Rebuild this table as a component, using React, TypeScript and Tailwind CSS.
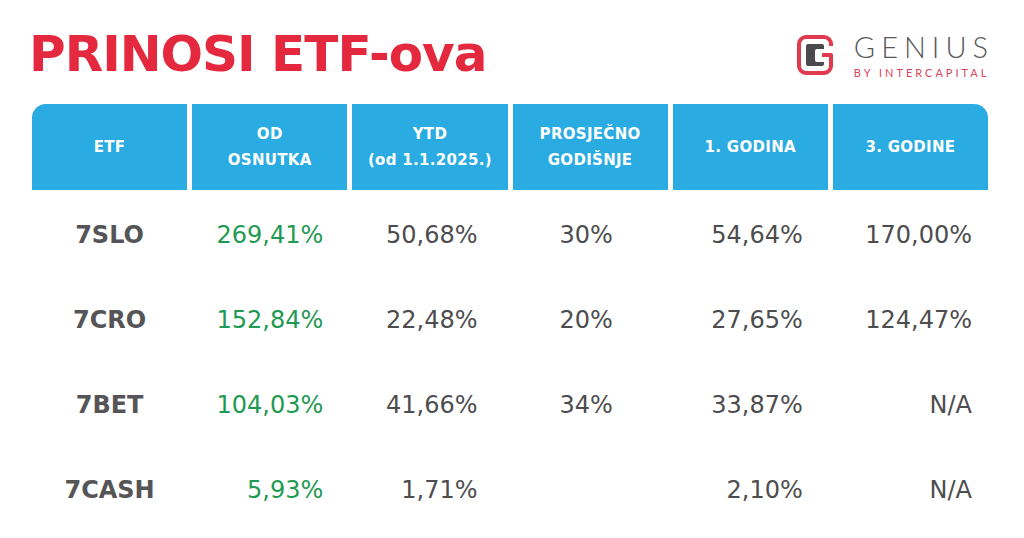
import React from 'react';

const rows = [
  { etf: '7SLO', since: '269,41%', ytd: '50,68%', avg: '30%', y1: '54,64%', y3: '170,00%' },
  { etf: '7CRO', since: '152,84%', ytd: '22,48%', avg: '20%', y1: '27,65%', y3: '124,47%' },
  { etf: '7BET', since: '104,03%', ytd: '41,66%', avg: '34%', y1: '33,87%', y3: 'N/A' },
  { etf: '7CASH', since: '5,93%', ytd: '1,71%', avg: '', y1: '2,10%', y3: 'N/A' },
];

const GeniusMark = () => (
  <svg width="38" height="40" viewBox="0 0 38 40" fill="none">
    <path
      d="M34 11 V9 a7 7 0 0 0 -7 -7 H9 a7 7 0 0 0 -7 7 V31 a7 7 0 0 0 7 7 H27 a7 7 0 0 0 7 -7 V20 H25"
      stroke="#e03a4e"
      strokeWidth="4"
      strokeLinejoin="round"
    />
    <path
      d="M11 9 H25 a2 2 0 0 1 2 2 V14 H20 a2 2 0 0 0 -2 2 V25 a2 2 0 0 0 2 2 H27 V29 a2 2 0 0 1 -2 2 H11 a2 2 0 0 1 -2 -2 V11 a2 2 0 0 1 2 -2 Z"
      fill="#4a4a4c"
    />
  </svg>
);

export default function App() {
  return (
    <div className="w-[1024px] h-[538px] bg-white overflow-hidden" style={{ fontFamily: '"DejaVu Sans", sans-serif' }}>
      <div className="flex items-center justify-between pl-[29px] pr-[30px] pt-[26px] h-[104px] pb-[22px]">
        <h1 className="text-[50px] leading-none font-bold text-[#e4293f] tracking-[-1px]">PRINOSI ETF-ova</h1>
        <div className="flex items-center gap-[19px] pt-[2px]">
          <GeniusMark />
          <div className="flex flex-col">
            <span className="text-[29px] leading-none text-[#58585a] tracking-[6px]" style={{ fontFamily: 'Lato, sans-serif', fontWeight: 300 }}>GENIUS</span>
            <span className="text-[11px] leading-none mt-[6px] text-[#d9455a] tracking-[3px]" style={{ fontFamily: 'Lato, sans-serif' }}>BY INTERCAPITAL</span>
          </div>
        </div>
      </div>

      <div className="mx-[32px] w-[956px]">
        <div className="grid grid-cols-6 gap-[5px] h-[86px]">
          {[
            ['ETF'],
            ['OD', 'OSNUTKA'],
            ['YTD', '(od 1.1.2025.)'],
            ['PROSJEČNO', 'GODIŠNJE'],
            ['1. GODINA'],
            ['3. GODINE'],
          ].map((lines, i) => (
            <div
              key={i}
              className={
                'bg-[#2aabe1] flex flex-col items-center justify-center text-white font-bold text-[15px] leading-[26px] tracking-[0.3px] ' +
                (i === 0 ? 'rounded-tl-[14px]' : i === 5 ? 'rounded-tr-[14px]' : '')
              }
            >
              {lines.map((l) => (
                <span key={l}>{l}</span>
              ))}
            </div>
          ))}
        </div>

        <div className="mt-[2px]">
          {rows.map((r) => (
            <div key={r.etf} className="grid grid-cols-6 gap-[5px] h-[85px] items-center text-[24px] text-[#4d4d4f]">
              <div className="text-center font-bold text-[#555557]">{r.etf}</div>
              <div className="text-right pr-[24px] text-[#1f9a52]">{r.since}</div>
              <div className="text-right pr-[30px]">{r.ytd}</div>
              <div className="text-center pr-[8px]">{r.avg}</div>
              <div className="text-right pr-[25px]">{r.y1}</div>
              <div className="text-right pr-[16px]">{r.y3}</div>
            </div>
          ))}
        </div>
      </div>
    </div>
  );
}
